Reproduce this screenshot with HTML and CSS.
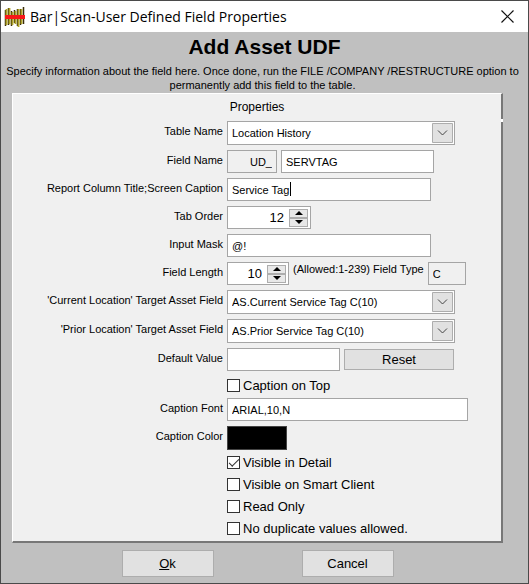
FILE: index.html
```html
<!DOCTYPE html>
<html lang="en">
<head>
	<meta charset="utf-8">
	<title>Bar|Scan-User Defined Field Properties</title>
	<link rel="stylesheet" href="styles.css">
</head>
<body>
<div class="window">
	<div class="titlebar">
		<svg class="logo" width="21" height="22" viewBox="0 0 21 22">
			<path d="M1.500 4v16M4.500 2v17M7.500 5v15M10.500 4v13M13.500 3v17M16.500 3v16M19.500 1v17" stroke="#3a2c08" stroke-width="1.500"/>
			<path d="M2.500 3v16M5.500 2v16M8.500 6v13M11.500 5v13M14.500 3v18M17.500 3v15" stroke="#b0a428" stroke-width="1.800"/>
			<path d="M1 9h20v4H1z" fill="#f81818"/>
		</svg>
		<span class="title">Bar|Scan-User Defined Field Properties</span>
		<button type="button" class="close" aria-label="Close">
			<svg width="13" height="13" viewBox="0 0 13 13"><path d="M.5 .5l12 12M12.500 .5L.5 12.500" stroke="#111" stroke-width="1.200"/></svg>
		</button>
	</div>

	<form class="content">
		<h1>Add Asset UDF</h1>
		<p class="intro">Specify information about the field here. Once done, run the FILE /COMPANY /RESTRUCTURE option to<br> permanently add this field to the table.</p>

		<div class="panel">
			<h2>Properties</h2>

			<div class="row tall">
				<label for="table_name">Table Name</label>
				<div class="dropdown">
					<select id="table_name"><option>Location History</option></select>
					<svg class="arrow" width="21" height="20" viewBox="0 0 21 20"><path d="M.5 .5h20v19H.5z" fill="#e1e1e1" stroke="#adadad"/><path d="M6 7.500l4.500 4.500L15 7.500" fill="none" stroke="#444"/></svg>
				</div>
			</div>
			<div class="row">
				<label for="field_name">Field Name</label>
				<input class="prefix" value="UD_" aria-label="Field prefix" readonly>
				<input class="name" id="field_name" value="SERVTAG">
			</div>
			<div class="row">
				<label for="caption">Report Column Title;Screen Caption</label>
				<div class="editing">
					<input class="text" id="caption" value="Service Tag">
					<span class="caret"></span>
				</div>
			</div>
			<div class="row">
				<label for="tab_order">Tab Order</label>
				<div class="spinner wide">
					<input id="tab_order" value="12">
					<div class="steps">
						<button type="button" aria-label="Up"><svg width="8" height="4" viewBox="0 0 8 4"><path d="M0 4l4-4 4 4z"/></svg></button>
						<button type="button" aria-label="Down"><svg width="8" height="4" viewBox="0 0 8 4"><path d="M0 0l4 4 4-4z"/></svg></button>
					</div>
				</div>
			</div>
			<div class="row">
				<label for="mask">Input Mask</label>
				<input class="text" id="mask" value="@!">
			</div>
			<div class="row">
				<label for="length">Field Length</label>
				<div class="spinner">
					<input id="length" value="10">
					<div class="steps">
						<button type="button" aria-label="Up"><svg width="8" height="4" viewBox="0 0 8 4"><path d="M0 4l4-4 4 4z"/></svg></button>
						<button type="button" aria-label="Down"><svg width="8" height="4" viewBox="0 0 8 4"><path d="M0 0l4 4 4-4z"/></svg></button>
					</div>
				</div>
				<label class="allowed" for="type">(Allowed:1-239) Field Type</label>
				<input class="type" id="type" value="C" readonly>
			</div>
			<div class="row tall">
				<label for="current">'Current Location' Target Asset Field</label>
				<div class="dropdown">
					<select id="current"><option>AS.Current Service Tag C(10)</option></select>
					<svg class="arrow" width="21" height="20" viewBox="0 0 21 20"><path d="M.5 .5h20v19H.5z" fill="#e1e1e1" stroke="#adadad"/><path d="M6 7.500l4.500 4.500L15 7.500" fill="none" stroke="#444"/></svg>
				</div>
			</div>
			<div class="row tall">
				<label for="prior">'Prior Location' Target Asset Field</label>
				<div class="dropdown">
					<select id="prior"><option>AS.Prior Service Tag C(10)</option></select>
					<svg class="arrow" width="21" height="20" viewBox="0 0 21 20"><path d="M.5 .5h20v19H.5z" fill="#e1e1e1" stroke="#adadad"/><path d="M6 7.500l4.500 4.500L15 7.500" fill="none" stroke="#444"/></svg>
				</div>
			</div>
			<div class="row">
				<label for="default">Default Value</label>
				<input class="default" id="default">
				<button type="button" class="reset">Reset</button>
			</div>
			<label class="check single"><input type="checkbox"> Caption on Top</label>
			<div class="row">
				<label for="font">Caption Font</label>
				<input class="font" id="font" value="ARIAL,10,N">
			</div>
			<div class="row last">
				<label for="color">Caption Color</label>
				<button type="button" class="color" id="color"></button>
			</div>
			<label class="check"><input type="checkbox" checked> Visible in Detail</label>
			<label class="check"><input type="checkbox"> Visible on Smart Client</label>
			<label class="check"><input type="checkbox"> Read Only</label>
			<label class="check"><input type="checkbox"> No duplicate values allowed.</label>
		</div>

		<div class="buttons">
			<button type="submit"><u>O</u>k</button>
			<button type="button">Cancel</button>
		</div>
	</form>
</div>
</body>
</html>
```
FILE: styles.css
```css
*{
	box-sizing: border-box;
}
body{
	margin: 0;
	font-family: "Liberation Sans", Arial, sans-serif;
	font-size: 12px;
	color: #000;
}
input, select, button{
	font-family: inherit;
	font-size: 11px;
	color: #000;
	margin: 0;
	border-radius: 0;
}
.window{
	min-height: 100vh;
	border: 1px solid #4a4a4a;
	background: #c0c0c0;
}

.titlebar{
	display: flex;
	align-items: center;
	height: 31px;
	padding: 0 14px 0 3px;
	background: #fff;
}
.title{
	flex: 1;
	margin-left: 5px;
	font-family: "Open Sans", sans-serif;
	font-size: 14px;
}
.close{
	display: flex;
	padding: 0;
	border: 0;
	background: none;
}

.content{
	padding: 2px 4px 5px;
}
h1{
	margin: 0;
	text-align: center;
	font-size: 21px;
	line-height: 26px;
}
.intro{
	margin: 4px 4px 1px 0;
	text-align: center;
	font-size: 11px;
	line-height: 14px;
}

.panel{
	position: relative;
	margin: 0 21px 0 7px;
	padding: 5px 0 2px;
	background: #f0f0f0;
	border: solid;
	border-width: 1px 2px 2px 1px;
	border-color: #fff #777 #777 #fff;
}
/* break between the tab and its page */
.panel::after{
	content: "";
	position: absolute;
	top: 25px;
	right: -2px;
	width: 2px;
	height: 3px;
	background: #fff;
}
h2{
	margin: 0 0 5px;
	text-align: center;
	font-size: 12px;
	font-weight: normal;
	line-height: 17px;
}

.row{
	display: grid;
	grid-template-columns: 210px auto auto auto;
	justify-content: start;
	column-gap: 4px;
	height: 23px;
	margin-bottom: 5px;
}
.row.tall{
	height: 24px;
}
.row.last{
	margin-bottom: 2px;
}
.row > label{
	line-height: 21px;
	font-size: 11px;
	text-align: right;
	white-space: nowrap;
}
.row > input, .text, .spinner, select{
	height: 100%;
	padding: 0 4px;
	border: 1px solid #a5a5a5;
	background: #fff;
}
.row > input[readonly]{
	background: #f0f0f0;
}
.row > .prefix{
	width: 50px;
	text-align: right;
}
.name{
	width: 153px;
}
.text{
	width: 204px;
}
.type{
	width: 38px;
}
.default{
	width: 113px;
}
.font{
	width: 241px;
}

.editing{
	position: relative;
}
.caret{
	position: absolute;
	top: 4px;
	left: 63px;
	width: 1px;
	height: 14px;
	background: #000;
}

.dropdown{
	position: relative;
	width: 228px;
}
select{
	appearance: none;
	width: 100%;
}
.arrow{
	position: absolute;
	top: 2px;
	right: 2px;
	pointer-events: none;
}

.spinner{
	display: flex;
	align-items: center;
	width: 62px;
	padding: 0 2px 0 0;
}
.spinner.wide{
	width: 84px;
}
.spinner input{
	flex: 1;
	min-width: 0;
	padding: 0 5px 0 0;
	border: 0;
	background: none;
	font-size: 13px;
	text-align: right;
}
.steps button{
	display: flex;
	align-items: center;
	justify-content: center;
	width: 19px;
	height: 9px;
	padding: 0;
	border: 1px solid #adadad;
	background: #e8e8e8;
}
.row > .allowed{
	line-height: 14px;
}

.reset, .buttons button{
	border: 1px solid #adadad;
	background: #e1e1e1;
	font-size: 13px;
}
.reset{
	width: 110px;
	height: 21px;
	align-self: center;
	padding: 0;
}
.color{
	width: 60px;
	height: 24px;
	border: 1px solid #444;
	background: #000;
}

.check{
	display: flex;
	align-items: center;
	gap: 3px;
	height: 22px;
	margin-left: 214px;
	font-size: 13px;
}
.check.single{
	height: 18px;
	margin-bottom: 4px;
}
.check input{
	appearance: none;
	width: 13px;
	height: 13px;
	border: 1px solid #333;
	background: #fff;
}
.check input:checked::before{
	content: "";
	display: block;
	width: 9px;
	height: 4px;
	margin: 2px 1px;
	border: solid #333;
	border-width: 0 0 1px 1px;
	transform: rotate(-45deg);
}

.buttons{
	display: flex;
	justify-content: center;
	gap: 88px;
	padding: 7px 14px 0 0;
}
.buttons button{
	width: 92px;
	height: 27px;
}
```
